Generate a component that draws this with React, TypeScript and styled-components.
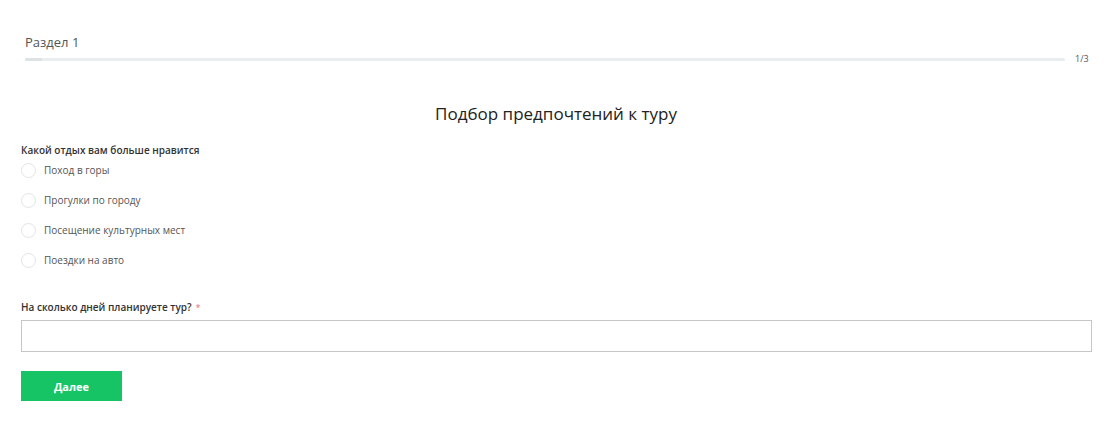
import React from "react";
import styled, { createGlobalStyle } from "styled-components";

const Global = createGlobalStyle`
  html, body { margin: 0; padding: 0; background: #fff; }
  body { font-family: "Open Sans", "Noto Sans", sans-serif; }
  * { box-sizing: border-box; }
`;

const Page = styled.div`
  width: 1108px;
  height: 430px;
  padding: 0 17px 0 21px;
`;

const Header = styled.div`
  padding: 33px 0 0 4px;
`;

const SectionTitle = styled.div`
  font-size: 13px;
  line-height: 18px;
  color: #555;
  font-weight: 400;
`;

const ProgressRow = styled.div`
  display: flex;
  align-items: center;
  gap: 10px;
  margin-top: 2px;
`;

const Track = styled.div`
  flex: 1;
  height: 3px;
  background: #e9edef;
  border-radius: 2px;
  overflow: hidden;
`;

const Fill = styled.div`
  height: 100%;
  background: #dde2e5;
`;

const Counter = styled.div`
  font-size: 9px;
  color: #555;
  width: 16px;
  line-height: 12px;
`;

const Title = styled.h1`
  margin: 37px 0 0;
  text-align: center;
  font-size: 17px;
  line-height: 24px;
  font-weight: 400;
  color: #222;
`;

const Question = styled.div`
  margin-top: 17px;
  font-size: 10px;
  font-weight: 600;
  color: #333;
  line-height: 14px;
`;

const Options = styled.div`
  display: flex;
  flex-direction: column;
  gap: 14px;
  margin-top: 5px;
`;

const Option = styled.label`
  display: flex;
  align-items: center;
  gap: 8px;
  height: 16px;
  font-size: 10px;
  color: #555;
`;

const Circle = styled.span`
  width: 15px;
  height: 15px;
  border-radius: 50%;
  border: 1px solid #e4e4e4;
  background: #fff;
  flex-shrink: 0;
`;

const Label2 = styled(Question)`
  margin-top: 32px;
`;

const Star = styled.span`
  color: #e57373;
  margin-left: 4px;
  font-weight: 400;
  font-size: 9px;
`;

const Input = styled.input`
  display: block;
  width: 1071px;
  height: 32px;
  margin-top: 5px;
  border: 1px solid #c6c6c6;
  outline: none;
  padding: 0 8px;
`;

const Button = styled.button`
  margin-top: 19px;
  width: 101px;
  height: 30px;
  background: #16c466;
  color: #fff;
  border: none;
  font-family: "Open Sans", sans-serif;
  font-size: 11px;
  font-weight: 700;
  cursor: pointer;
`;

const options = [
  "Поход в горы",
  "Прогулки по городу",
  "Посещение культурных мест",
  "Поездки на авто",
];

export default function App() {
  return (
    <Page>
      <Global />
      <Header>
        <SectionTitle>Раздел 1</SectionTitle>
        <ProgressRow>
          <Track>
            <Fill style={{ width: `${(1 / 3) * 5}%` }} />
          </Track>
          <Counter>1/3</Counter>
        </ProgressRow>
      </Header>
      <Title>Подбор предпочтений к туру</Title>
      <Question>Какой отдых вам больше нравится</Question>
      <Options>
        {options.map((o) => (
          <Option key={o}>
            <Circle />
            {o}
          </Option>
        ))}
      </Options>
      <Label2>
        На сколько дней планируете тур?<Star>*</Star>
      </Label2>
      <Input />
      <Button>Далее</Button>
    </Page>
  );
}
